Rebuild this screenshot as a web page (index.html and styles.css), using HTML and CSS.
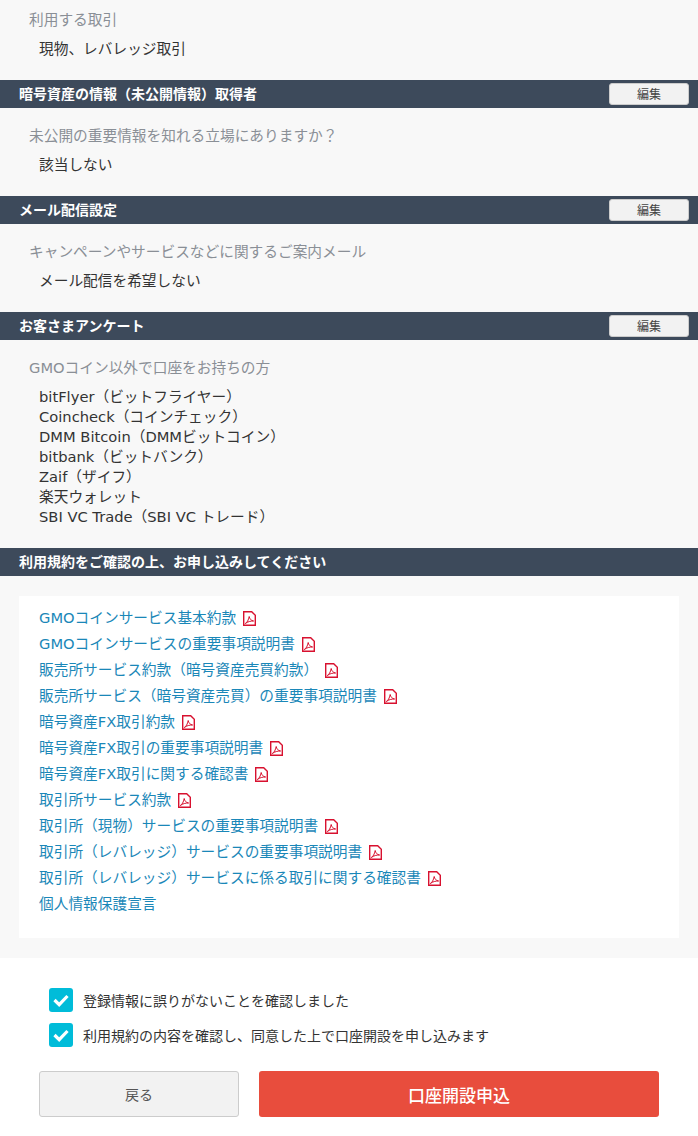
FILE: index.html
```html
<!DOCTYPE html>
<html lang="ja">

<head>
    <meta charset="UTF-8">
    <meta name="viewport" content="width=device-width, initial-scale=1.0">
    <title>口座開設申込</title>
    <link rel="stylesheet" href="styles.css">
</head>

<body>
<svg class="defs" width="0" height="0" aria-hidden="true">
    <symbol id="pdf" viewBox="0 0 13 15">
        <path d="M.7.7h8l3.600 3.600v10H.7z" fill="#fff" stroke="#d8112f" stroke-width="1.400"/>
        <path d="M2.300 12.500c1.700-.8 3.300-3.600 3.900-7 .5 2.500 1.800 4 4.400 4.500-3-.1-5.800.7-8.300 2.500z" fill="none" stroke="#d8112f" stroke-width="1"/>
    </symbol>
    <symbol id="check" viewBox="0 0 24 24">
        <path d="M5.500 12l4.700 4.700L18.500 8" fill="none" stroke="#fff" stroke-width="3.200"/>
    </symbol>
</svg>

<div class="confirm">
    <div class="info info-first">
        <p class="label">利用する取引</p>
        <p class="value">現物、レバレッジ取引</p>
    </div>

    <div class="bar">
        <h2>暗号資産の情報（未公開情報）取得者</h2>
        <button class="btn-edit">編集</button>
    </div>
    <div class="info">
        <p class="label">未公開の重要情報を知れる立場にありますか？</p>
        <p class="value">該当しない</p>
    </div>

    <div class="bar">
        <h2>メール配信設定</h2>
        <button class="btn-edit">編集</button>
    </div>
    <div class="info">
        <p class="label">キャンペーンやサービスなどに関するご案内メール</p>
        <p class="value">メール配信を希望しない</p>
    </div>

    <div class="bar">
        <h2>お客さまアンケート</h2>
        <button class="btn-edit">編集</button>
    </div>
    <div class="info">
        <p class="label">GMOコイン以外で口座をお持ちの方</p>
        <p class="value">bitFlyer（ビットフライヤー）</p>
        <p class="value-more">Coincheck（コインチェック）</p>
        <p class="value-more">DMM Bitcoin（DMMビットコイン）</p>
        <p class="value-more">bitbank（ビットバンク）</p>
        <p class="value-more">Zaif（ザイフ）</p>
        <p class="value-more">楽天ウォレット</p>
        <p class="value-more">SBI VC Trade（SBI VC トレード）</p>
    </div>

    <div class="bar">
        <h2>利用規約をご確認の上、お申し込みしてください</h2>
    </div>
    <div class="terms-wrap">
        <ul class="terms">
            <li><a href="#">GMOコインサービス基本約款</a><svg class="icon-pdf"><use href="#pdf"/></svg></li>
            <li><a href="#">GMOコインサービスの重要事項説明書</a><svg class="icon-pdf"><use href="#pdf"/></svg></li>
            <li><a href="#">販売所サービス約款（暗号資産売買約款）</a><svg class="icon-pdf"><use href="#pdf"/></svg></li>
            <li><a href="#">販売所サービス（暗号資産売買）の重要事項説明書</a><svg class="icon-pdf"><use href="#pdf"/></svg></li>
            <li><a href="#">暗号資産FX取引約款</a><svg class="icon-pdf"><use href="#pdf"/></svg></li>
            <li><a href="#">暗号資産FX取引の重要事項説明書</a><svg class="icon-pdf"><use href="#pdf"/></svg></li>
            <li><a href="#">暗号資産FX取引に関する確認書</a><svg class="icon-pdf"><use href="#pdf"/></svg></li>
            <li><a href="#">取引所サービス約款</a><svg class="icon-pdf"><use href="#pdf"/></svg></li>
            <li><a href="#">取引所（現物）サービスの重要事項説明書</a><svg class="icon-pdf"><use href="#pdf"/></svg></li>
            <li><a href="#">取引所（レバレッジ）サービスの重要事項説明書</a><svg class="icon-pdf"><use href="#pdf"/></svg></li>
            <li><a href="#">取引所（レバレッジ）サービスに係る取引に関する確認書</a><svg class="icon-pdf"><use href="#pdf"/></svg></li>
            <li><a href="#">個人情報保護宣言</a></li>
        </ul>
    </div>
</div>

<div class="agree">
    <div class="check-item">
        <span class="checkbox"><svg><use href="#check"/></svg></span>
        <span>登録情報に誤りがないことを確認しました</span>
    </div>
    <div class="check-item">
        <span class="checkbox"><svg><use href="#check"/></svg></span>
        <span>利用規約の内容を確認し、同意した上で口座開設を申し込みます</span>
    </div>
    <div class="actions">
        <button class="btn-back">戻る</button>
        <button class="btn-submit">口座開設申込</button>
    </div>
</div>
</body>

</html>
```

FILE: styles.css
```css
html,
body {
    margin: 0;
    padding: 0;
    background: #fff;
    font-family: "DejaVu Sans", "Noto Sans CJK JP", sans-serif;
    font-size: 14.7px;
    color: #333;
}

p,
h2,
ul {
    margin: 0;
    padding: 0;
}

.defs {
    position: absolute;
}

.confirm {
    background: #f8f8f8;
}

.info {
    padding: 16px 29px 21px;
}

.info-first {
    padding-top: 8px;
}

.label {
    line-height: 24px;
    color: #8a8f96;
}

.value,
.value-more {
    padding-left: 10px;
    line-height: 20px;
}

.value {
    margin-top: 7px;
}

.bar {
    height: 28px;
    padding: 0 9px 0 19px;
    display: flex;
    align-items: center;
    justify-content: space-between;
    background: #3d4a5b;
}

.bar h2 {
    padding-bottom: 2px;
    font-size: 14px;
    font-weight: bold;
    color: #fff;
}

.btn-edit {
    width: 80px;
    height: 22px;
    padding: 0 0 2px;
    font-family: inherit;
    font-size: 12px;
    color: #444;
    background: #f2f2f2;
    border: 1px solid #ccc;
    border-radius: 3px;
}

.terms-wrap {
    padding: 20px 19px;
}

.terms {
    list-style: none;
    background: #fff;
    padding: 9px 20px 21px;
}

.terms li {
    height: 26px;
    display: flex;
    align-items: center;
}

.terms a {
    padding-bottom: 3px;
    color: #1a87b8;
    text-decoration: none;
}

.icon-pdf {
    width: 13px;
    height: 15px;
    margin-left: 7px;
}

.agree {
    padding: 30px 39px 19px;
}

.check-item {
    height: 24px;
    margin: 0 0 11px 10px;
    display: flex;
    align-items: center;
    gap: 10px;
    font-size: 14px;
}

.checkbox {
    width: 24px;
    height: 24px;
    background: #00bcd9;
    border-radius: 3px;
}

.checkbox svg {
    display: block;
    width: 24px;
    height: 24px;
}

.actions {
    margin-top: 24px;
    display: flex;
    gap: 20px;
}

.actions button {
    height: 46px;
    padding: 0;
    font-family: inherit;
    border-radius: 3px;
}

.btn-back {
    width: 200px;
    font-size: 14px;
    color: #555;
    background: #f2f2f2;
    border: 1px solid #ccc;
}

.btn-submit {
    width: 400px;
    font-size: 17px;
    font-weight: 500;
    color: #fff;
    background: #e84d3d;
    border: none;
}
```
